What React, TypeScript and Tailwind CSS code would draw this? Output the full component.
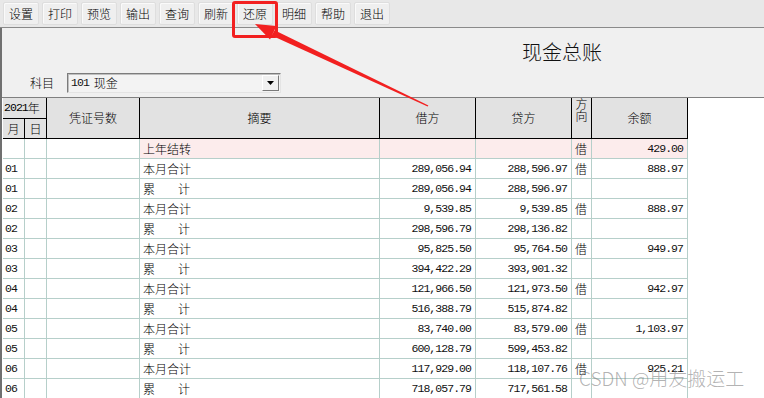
import React from "react";

const CJK = { fontFamily: '"Noto Sans CJK SC", "Noto Sans", sans-serif' };
const MONO = { fontFamily: '"Liberation Mono", "Noto Sans CJK SC", monospace' };

type Row = { m: string; s: string; d: string; c: string; dir: string; b: string; pink?: boolean };

const rows: Row[] = [
  { m: "", s: "上年结转", d: "", c: "", dir: "借", b: "429.00", pink: true },
  { m: "01", s: "本月合计", d: "289,056.94", c: "288,596.97", dir: "借", b: "888.97" },
  { m: "01", s: "累计", d: "289,056.94", c: "288,596.97", dir: "", b: "" },
  { m: "02", s: "本月合计", d: "9,539.85", c: "9,539.85", dir: "借", b: "888.97" },
  { m: "02", s: "累计", d: "298,596.79", c: "298,136.82", dir: "", b: "" },
  { m: "03", s: "本月合计", d: "95,825.50", c: "95,764.50", dir: "借", b: "949.97" },
  { m: "03", s: "累计", d: "394,422.29", c: "393,901.32", dir: "", b: "" },
  { m: "04", s: "本月合计", d: "121,966.50", c: "121,973.50", dir: "借", b: "942.97" },
  { m: "04", s: "累计", d: "516,388.79", c: "515,874.82", dir: "", b: "" },
  { m: "05", s: "本月合计", d: "83,740.00", c: "83,579.00", dir: "借", b: "1,103.97" },
  { m: "05", s: "累计", d: "600,128.79", c: "599,453.82", dir: "", b: "" },
  { m: "06", s: "本月合计", d: "117,929.00", c: "118,107.76", dir: "借", b: "925.21" },
  { m: "06", s: "累计", d: "718,057.79", c: "717,561.58", dir: "", b: "" },
];

const tools = ["设置", "打印", "预览", "输出", "查询", "刷新", "还原", "明细", "帮助", "退出"];

const COLS = "grid grid-cols-[22px_22px_93px_240px_96px_96px_20px_96px] w-[685px]";

function Num({ v }: { v: string }) {
  return (
    <div className="h-full flex items-center justify-end pr-[4px] text-[11.5px] tracking-[-0.95px] text-[#111]" style={MONO}>
      {v}
    </div>
  );
}

export default function App() {
  return (
    <div className="relative w-[764px] h-[398px] overflow-hidden bg-[#f0f0f0] flex flex-col font-light" style={CJK}>
      {/* toolbar */}
      <div className="h-[28px] shrink-0 bg-[#e8e8e8] border-b border-[#8a8a8a] flex items-start pt-[2px] pl-[3px] gap-[3px]">
        {tools.map((t) => (
          <div
            key={t}
            className="w-[36px] h-[23px] rounded-[2px] bg-[#efefef] border border-[#dedede] shadow-[inset_1px_1px_0_#fafafa] flex items-center justify-center text-[12px] text-black"
          >
            {t}
          </div>
        ))}
      </div>

      <div className="flex-1 flex flex-col border-l-2 border-[#707070]">
        {/* header area */}
        <div className="h-[69px] shrink-0 pt-[14px] flex flex-col">
          <div className="h-[20px] pl-[520px] text-[20px] leading-[20px] text-[#111]">现金总账</div>
          <div className="mt-[11px] h-[20px] flex items-center">
            <div className="ml-[28px] w-[37px] text-[12px] text-black">科目</div>
            <div className="w-[214px] h-[20px] flex items-center bg-[#f3f3f3] border border-t-[#7c7c7c] border-l-[#7c7c7c] border-r-[#e4e4e4] border-b-[#e4e4e4] shadow-[inset_1px_1px_0_#bfbfbf]">
              <span className="pl-[3px] text-[11.5px] tracking-[-0.95px] text-[#111]" style={MONO}>101 </span>
              <span className="pl-[5px] text-[12px] text-black">现金</span>
              <div className="ml-auto mr-[1px] w-[17px] h-[16px] bg-[#f0f0f0] border border-t-white border-l-white border-r-[#7a7a7a] border-b-[#7a7a7a] flex items-center justify-center">
                <svg width="7" height="4" viewBox="0 0 7 4">
                  <polygon points="0,0 7,0 3.5,4" fill="#000" />
                </svg>
              </div>
            </div>
          </div>
        </div>

        {/* table */}
        <div className="flex-1 bg-white border-t border-[#808080] pl-px">
          <div className={`${COLS} grid-rows-[21px_20px] bg-[#e2e2e2]`}>
            <div className="col-span-2 border-r border-b border-black flex items-center pl-px text-[12px] text-black">
              <span className="text-[11.5px] tracking-[-0.95px]" style={MONO}>2021</span>
              <span>年</span>
            </div>
            <div className="row-span-2 col-start-3 row-start-1 border-r border-b border-black flex items-center justify-center text-[12px] text-black">凭证号数</div>
            <div className="row-span-2 col-start-4 row-start-1 border-r border-b border-black flex items-center justify-center text-[12px] text-black">摘要</div>
            <div className="row-span-2 col-start-5 row-start-1 border-r border-b border-black flex items-center justify-center text-[12px] text-black">借方</div>
            <div className="row-span-2 col-start-6 row-start-1 border-r border-b border-black flex items-center justify-center text-[12px] text-black">贷方</div>
            <div className="row-span-2 col-start-7 row-start-1 border-r border-b border-black flex flex-col items-center text-[12px] text-black">
              <span className="h-[12px] leading-[12px]">方</span>
              <span className="h-[12px] leading-[12px]">向</span>
            </div>
            <div className="row-span-2 col-start-8 row-start-1 border-r border-b border-black flex items-center justify-center text-[12px] text-black">余额</div>
            <div className="col-start-1 row-start-2 border-r border-b border-black flex items-center justify-center text-[12px] text-black">月</div>
            <div className="col-start-2 row-start-2 border-r border-b border-black flex items-center justify-center text-[12px] text-black">日</div>
          </div>

          {rows.map((r, i) => {
            const pink = r.pink ? "bg-[#fcecec]" : "";
            const cell = "h-[20px] border-r border-b border-[#b6cfca]";
            return (
              <div key={i} className={COLS}>
                <div className={`${cell} flex items-center pl-[2px] text-[11.5px] tracking-[-0.95px] text-[#111]`} style={MONO}>
                  {r.m}
                </div>
                <div className={cell}></div>
                <div className={cell}></div>
                <div className={`${cell} ${pink} flex items-center pl-[3px] text-[12px] text-black`}>
                  {r.s === "累计" ? (
                    <span className="w-[47px] flex justify-between">
                      <span>累</span>
                      <span>计</span>
                    </span>
                  ) : (
                    r.s
                  )}
                </div>
                <div className={`${cell} ${pink}`}>
                  <Num v={r.d} />
                </div>
                <div className={`${cell} ${pink}`}>
                  <Num v={r.c} />
                </div>
                <div className={`${cell} ${pink} flex items-center pl-[3px] text-[12px] text-black`}>{r.dir}</div>
                <div className={`${cell} ${pink}`}>
                  <Num v={r.b} />
                </div>
              </div>
            );
          })}
        </div>
      </div>

      {/* red highlight box */}
      <div className="absolute left-[232px] top-[1px] w-[46px] h-[37px] border-[3px] border-[#f22020] rounded-[3px]"></div>

      {/* red arrow */}
      <svg className="absolute left-0 top-0 pointer-events-none" width="764" height="398" viewBox="0 0 764 398">
        <polygon points="255,24 276.5,26 270,39.5" fill="#f22020" />
        <polygon points="274.6,30.2 271.6,35.4 427.6,106.6 428.4,105.4" fill="#f22020" />
      </svg>

      {/* watermark */}
      <div className="absolute left-[579px] top-[366px] text-[19px] leading-[24px] text-[rgba(128,128,128,0.6)] whitespace-nowrap">
        CSDN @用友搬运工
      </div>
    </div>
  );
}
